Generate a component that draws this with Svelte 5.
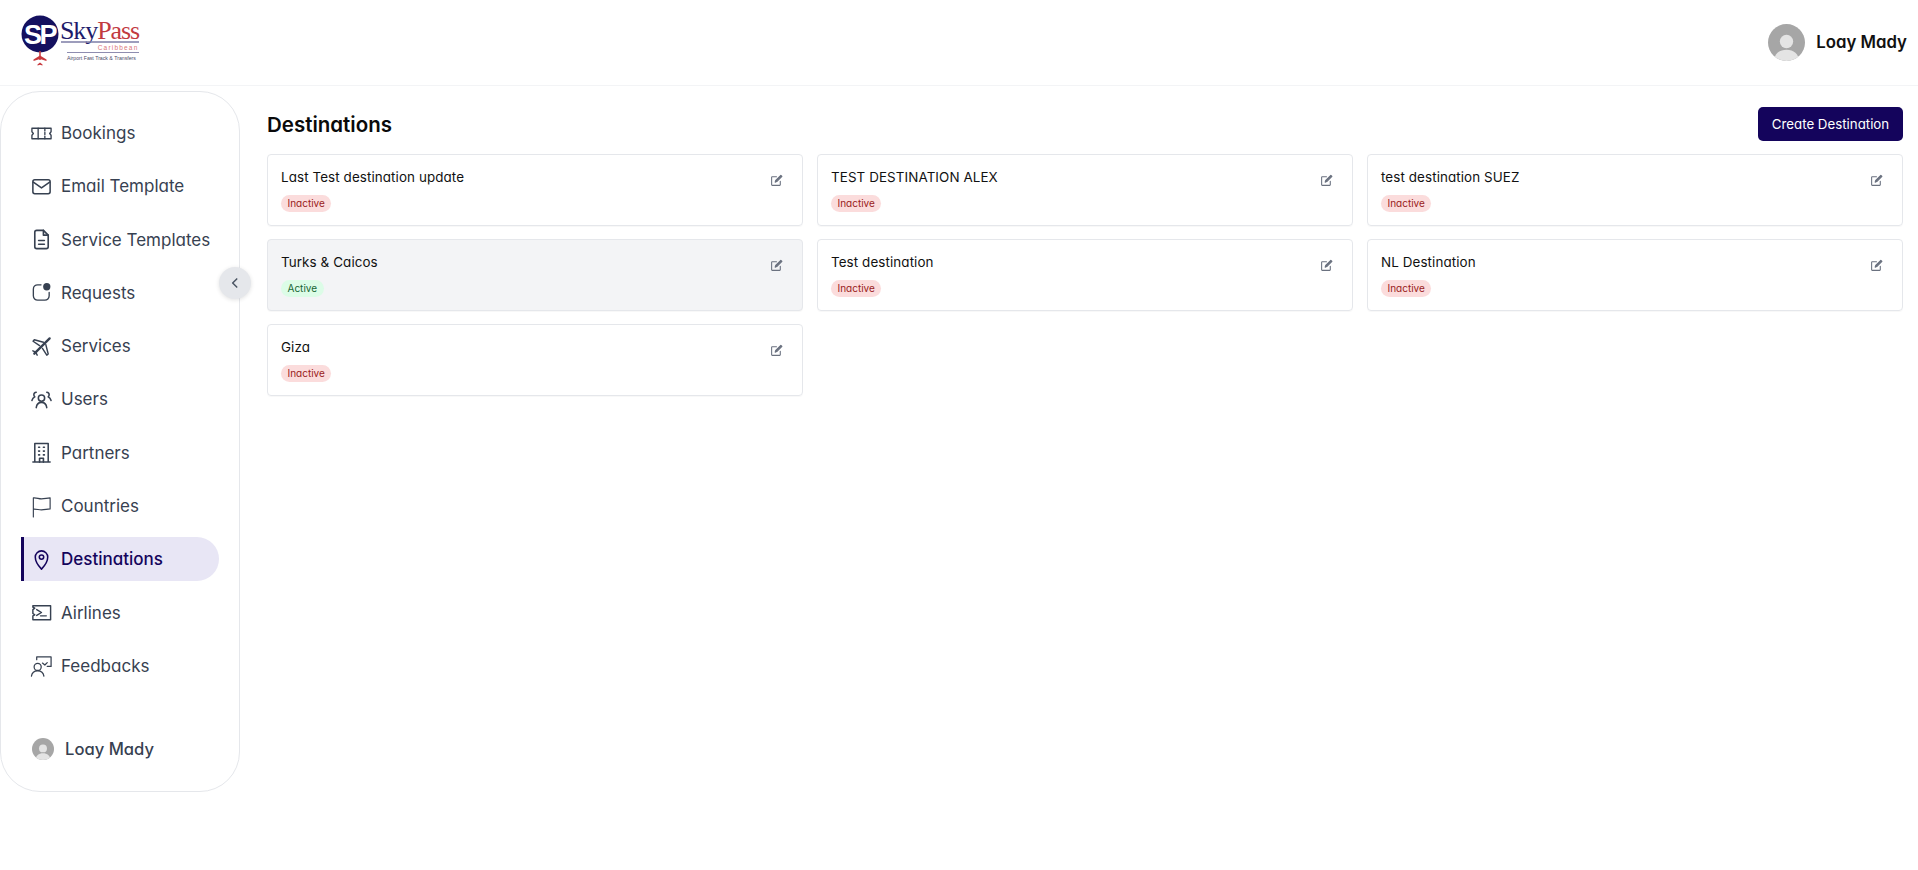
<script lang="ts">
  type Dest = { name: string; active: boolean };

  const nav = [
    { label: 'Bookings', icon: 'ticket' },
    { label: 'Email Template', icon: 'mail' },
    { label: 'Service Templates', icon: 'file' },
    { label: 'Requests', icon: 'notify' },
    { label: 'Services', icon: 'plane' },
    { label: 'Users', icon: 'users' },
    { label: 'Partners', icon: 'building' },
    { label: 'Countries', icon: 'flag' },
    { label: 'Destinations', icon: 'pin' },
    { label: 'Airlines', icon: 'terminal' },
    { label: 'Feedbacks', icon: 'feedback' }
  ];

  const destinations: Dest[] = [
    { name: 'Last Test destination update', active: false },
    { name: 'TEST DESTINATION ALEX', active: false },
    { name: 'test destination SUEZ', active: false },
    { name: 'Turks & Caicos', active: true },
    { name: 'Test destination', active: false },
    { name: 'NL Destination', active: false },
    { name: 'Giza', active: false }
  ];
</script>

{#snippet avatar(size: number)}
  <svg class="avatar" width={size} height={size} viewBox="0 0 36 36">
    <defs>
      <clipPath id="av-{size}"><circle cx="18" cy="18" r="18" /></clipPath>
    </defs>
    <g clip-path="url(#av-{size})">
      <rect width="36" height="36" fill="#a6a6a6" />
      <circle cx="18" cy="17" r="6.5" fill="#e4e4e4" />
      <path d="M6 36c0-7 5-11 12-11s12 4 12 11z" fill="#e4e4e4" />
    </g>
  </svg>
{/snippet}

{#snippet navIcon(name: string)}
  <svg class="ico" viewBox="0 0 24 24" fill="none" stroke="currentColor" stroke-width="1.4" stroke-linecap="round" stroke-linejoin="round">
    {#if name === 'ticket'}
      <path d="M2 6.500h20v3.700l-1.500 1.800 1.500 1.800v3.700H2v-3.700L3.500 12 2 10.200z" />
      <path d="M8.500 6.500v11M15.500 6.500v2.800M15.500 11v2M15.500 14.700v2.800" />
    {:else if name === 'mail'}
      <rect x="3" y="5" width="18" height="14.500" rx="2" stroke-width="1.600" />
      <path d="M3.500 7.500l8.500 6 8.500-6" stroke-width="1.600" />
    {:else if name === 'file'}
      <path d="M14 2.500H7a2 2 0 0 0-2 2v15a2 2 0 0 0 2 2h10a2 2 0 0 0 2-2V7.500z" stroke-width="1.700" />
      <path d="M14 2.500v5h5M9 13h6M9 17h6" stroke-width="1.700" />
    {:else if name === 'notify'}
      <path d="M11.500 4H8a4.500 4.500 0 0 0-4.500 4.500v7A4.500 4.500 0 0 0 8 20h7.500a4.500 4.500 0 0 0 4.500-4.500V12" />
      <circle cx="17.500" cy="6" r="3.800" fill="currentColor" stroke="none" />
    {:else if name === 'plane'}
      <path d="M20.500 3.500L4.500 19.500" stroke-width="2.400" />
      <path d="M14 7.500L4.500 5 3.200 6.500 10 11M16.500 10L19 19.800 17.500 21 13 14M3 16.500L6 18l1.500 3" stroke-width="1.500" />
    {:else if name === 'users'}
      <circle cx="12" cy="10.500" r="3.300" stroke-width="1.600" />
      <path d="M6.500 20.500c.5-3.500 2.500-5.500 5.500-5.500s5 2 5.500 5.500" stroke-width="1.600" />
      <path d="M6.500 4.500a2.600 2.600 0 0 0-2.500 2.600c0 1 .4 1.700 1 2.200-1.500.7-2.500 2-3 3.700M17.500 4.500a2.600 2.600 0 0 1 2.500 2.600c0 1-.4 1.700-1 2.200 1.500.7 2.500 2 3 3.700" stroke-width="1.600" />
    {:else if name === 'building'}
      <path d="M5 22V2.500h14V22M3 22h18" stroke-width="1.600" />
      <path d="M9 6.500h1M14 6.500h1M9 10.500h1M14 10.500h1M9 14.500h1M14 14.500h1M10 22v-4h4v4" stroke-width="1.700" />
    {:else if name === 'flag'}
      <path d="M3.500 23V3c4-.3 5 1 8.500 1s5-.7 9-1v11.500c-4 .3-5.500 1-9 1s-4.500-1-8.500-.8" stroke-width="1.200" />
    {:else if name === 'pin'}
      <path d="M12 22s-6.500-6.500-6.500-12.500a6.500 6.500 0 0 1 13 0C18.500 15.500 12 22 12 22z" stroke-width="1.600" />
      <circle cx="12" cy="9.500" r="2.300" stroke-width="1.600" />
    {:else if name === 'terminal'}
      <path d="M3 5h18.500v14.500H3v-4l2-1-2-1.500V9l2-1.500-2-1z" stroke-width="1.500" />
      <path d="M7 9l5 3-5 3M11 15.500h6" stroke-width="1.500" />
    {:else if name === 'feedback'}
      <circle cx="8" cy="13.500" r="3.700" stroke-width="1.300" />
      <path d="M1.500 23c.5-3.500 3-5.500 6.500-5.500s6 2 6.500 5.500M7 6V3h15v10h-4M13 9.500l2.500 2 2.500-2.500" stroke-width="1.300" />
    {/if}
  </svg>
{/snippet}

<div class="page">
  <header class="topbar">
    <svg class="logo" width="120" height="66" viewBox="0 0 120 66">
      <circle cx="20" cy="25" r="18.500" fill="#14105f" />
      <text x="4" y="35" class="logo-sp">SP</text>
      <path d="M20 42v9" stroke="#c8383c" stroke-width="1.500" />
      <path d="M20 46.500l-6.500 4v1.500l6.500-2 6.500 2v-1.500zM17.500 55.500l2.500-2 2.500 2v1l-2.500-.8-2.500.8z" fill="#c8383c" />
      <text x="40" y="30" class="logo-sky">Sky<tspan fill="#c23a3f">Pass</tspan></text>
      <path d="M41 33h78" stroke="#7d7ca6" stroke-width="1.300" />
      <text x="118.500" y="41" class="logo-car" text-anchor="end">Caribbean</text>
      <path d="M47 43.500h72" stroke="#8e8db0" stroke-width="1.200" />
      <text x="47" y="50.500" class="logo-tag">Airport Fast Track &amp; Transfers</text>
    </svg>
    <div class="user">
      {@render avatar(37)}
      <span>Loay Mady</span>
    </div>
  </header>

  <div class="body">
    <aside class="sidebar">
      <nav class="nav">
        {#each nav as item}
          <a class="nav-item" class:current={item.label === 'Destinations'} href="#top">
            {@render navIcon(item.icon)}
            <span>{item.label}</span>
          </a>
        {/each}
      </nav>
      <div class="side-user">
        {@render avatar(22)}
        <span>Loay Mady</span>
      </div>
      <button class="collapse" aria-label="Collapse sidebar">
        <svg width="14" height="14" viewBox="0 0 24 24" fill="none" stroke="#4b5563" stroke-width="2.600" stroke-linecap="round" stroke-linejoin="round"><path d="M15 5l-7 7 7 7" /></svg>
      </button>
    </aside>

    <main class="main">
      <div class="main-head">
        <h1>Destinations</h1>
        <button class="primary">Create Destination</button>
      </div>
      <div class="grid">
        {#each destinations as d}
          <div class="card" class:on={d.active}>
            <div>
              <p class="name">{d.name}</p>
              <span class="badge" class:ok={d.active}>{d.active ? 'Active' : 'Inactive'}</span>
            </div>
            <svg class="edit" viewBox="0 0 24 24" fill="none" stroke="#6b7280" stroke-width="2" stroke-linejoin="round" stroke-linecap="round">
              <path d="M19 13.500V20a1 1 0 0 1-1 1H4a1 1 0 0 1-1-1V6a1 1 0 0 1 1-1h8" />
              <path d="M20 2.500l2 2L12.500 14l-3 1 1-3z" fill="#6b7280" />
            </svg>
          </div>
        {/each}
      </div>
    </main>
  </div>
</div>

<style>
  :global(body) {
    background: #fff;
    font-family: Inter, "Liberation Sans", sans-serif;
    font-feature-settings: "cv11" 1;
    color: #111827;
  }
  .page {
    height: 870px;
    overflow: hidden;
  }
  .topbar {
    box-sizing: border-box;
    height: 86px;
    border-bottom: 1px solid #f3f4f6;
    display: flex;
    align-items: center;
    justify-content: space-between;
    padding: 0 11px 1px 20px;
  }
  .logo {
    overflow: visible;
  }
  .logo-sp {
    font-family: "Liberation Sans", sans-serif;
    font-size: 27px;
    font-weight: 700;
    letter-spacing: -2.500px;
    fill: #fff;
  }
  .logo-sky {
    font-family: "Liberation Serif", serif;
    font-size: 26px;
    letter-spacing: -1.100px;
    fill: #1e1b6b;
  }
  .logo-car {
    font-family: "Liberation Sans", sans-serif;
    font-size: 6.500px;
    letter-spacing: 1.200px;
    fill: #d9777a;
  }
  .logo-tag {
    font-family: "Liberation Sans", sans-serif;
    font-size: 5.200px;
    fill: #4a4a6a;
  }
  .user {
    display: flex;
    align-items: center;
    gap: 11px;
    font-size: 16.800px;
    font-weight: 600;
    color: #111;
  }
  .avatar {
    display: block;
    flex: none;
  }
  .body {
    display: flex;
    padding-top: 5px;
  }
  .sidebar {
    position: relative;
    flex: none;
    box-sizing: border-box;
    width: 240px;
    height: 701px;
    border: 1px solid #e5e7eb;
    border-radius: 40px;
    display: flex;
    flex-direction: column;
    justify-content: space-between;
    padding: 19px 0 31px 20px;
  }
  .nav {
    display: flex;
    flex-direction: column;
    gap: 9.300px;
  }
  .nav-item {
    display: flex;
    align-items: center;
    gap: 8.500px;
    box-sizing: border-box;
    width: 198px;
    height: 44px;
    padding-left: 5.500px;
    border-radius: 0 22px 22px 0;
    border-left: 3px solid transparent;
    color: #374151;
    font-size: 17px;
    text-decoration: none;
    white-space: nowrap;
  }
  .nav-item.current {
    background: #e8e6f5;
    border-left-color: #14045c;
    color: #14045c;
    font-weight: 500;
  }
  .ico {
    width: 23px;
    height: 23px;
    flex: none;
  }
  .side-user {
    display: flex;
    align-items: center;
    gap: 11px;
    padding-left: 11px;
    color: #374151;
    font-size: 16.600px;
    font-weight: 500;
  }
  .collapse {
    position: absolute;
    top: 175px;
    right: -12px;
    width: 32px;
    height: 32px;
    border: 0;
    border-radius: 50%;
    background: #e5e7eb;
    box-shadow: 0 1px 4px rgba(0, 0, 0, 0.12);
    display: flex;
    align-items: center;
    justify-content: center;
    padding: 0;
  }
  .main {
    flex: 1;
    min-width: 0;
    padding: 16px 15px 0 27px;
  }
  .main-head {
    display: flex;
    align-items: center;
    justify-content: space-between;
    margin-bottom: 13px;
  }
  h1 {
    margin: 0;
    font-size: 20.500px;
    font-weight: 600;
    color: #0a0a0a;
  }
  .primary {
    height: 34px;
    width: 145px;
    padding: 0;
    border: 0;
    border-radius: 5px;
    background: #14045c;
    color: #fff;
    font: inherit;
    font-size: 13.300px;
    font-weight: 400;
  }
  .grid {
    display: grid;
    grid-template-columns: repeat(3, 1fr);
    gap: 13px 14px;
  }
  .card {
    box-sizing: border-box;
    height: 72px;
    border: 1px solid #e5e7eb;
    border-radius: 4px;
    padding: 12px 13px 0;
    display: flex;
    justify-content: space-between;
    box-shadow: 0 1px 1px rgba(0, 0, 0, 0.03);
  }
  .card.on {
    background: #f3f4f6;
  }
  .name {
    margin: 0 0 4px;
    font-size: 13.400px;
    font-weight: 400;
    letter-spacing: 0.1px;
    line-height: 20px;
    color: #111;
  }
  .badge {
    display: inline-block;
    padding: 0 6.500px;
    border-radius: 9px;
    background: #fbdcdc;
    color: #991b1b;
    font-size: 10px;
    font-weight: 400;
    line-height: 17px;
  }
  .badge.ok {
    background: #dcfce7;
    color: #166534;
  }
  .edit {
    width: 13px;
    height: 13px;
    margin: 7px 6px 0 0;
    flex: none;
  }
</style>
